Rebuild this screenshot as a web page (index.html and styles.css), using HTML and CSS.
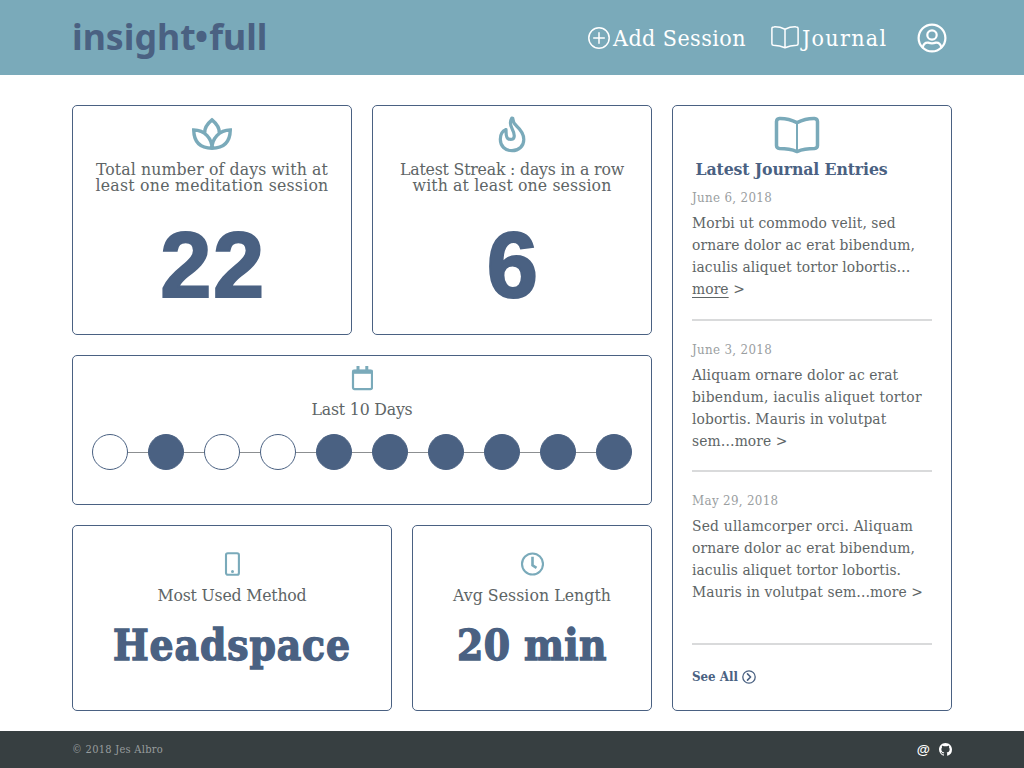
FILE: index.html
```html
<!DOCTYPE html>
<html lang="en">
<head>
<meta charset="utf-8">
<title>insight•full</title>
<link rel="stylesheet" href="styles.css">
</head>
<body>
<header class="header">
  <div class="logo">insight<span class="logo-dot">•</span>full</div>
  <nav class="nav">
    <a class="nav-item nav-add">
      <svg width="22" height="22" viewBox="0 0 22 22"><circle cx="11" cy="11" r="10.2"/><path d="M11 5.7v10.6M5.7 11h10.6"/></svg>
      <span class="nav-text">Add Session</span>
    </a>
    <a class="nav-item nav-journal">
      <svg width="28" height="23" viewBox="0 0 28 23"><path d="M14 3.2Q8.5.6 2.8.9Q.9.9.9 2.6V17.7Q.9 19.2 2.5 19.3Q9 19.5 14 21.8Q19 19.5 25.5 19.3Q27.1 19.2 27.1 17.7V2.6Q27.1.9 25.2.9Q19.5.6 14 3.2ZM14 3.2V21.8"/></svg>
      <span class="nav-text">Journal</span>
    </a>
    <a class="nav-user">
      <svg width="30" height="30" viewBox="0 0 30 30"><circle cx="15" cy="15" r="13.4"/><circle cx="15" cy="12" r="4.7"/><path d="M5.7 24.4C6.4 20.9 8.6 19.4 11.2 19.6Q15 21 18.8 19.6C21.4 19.4 23.6 20.9 24.3 24.4"/></svg>
    </a>
  </nav>
</header>

<main class="main">
  <div class="stats">
    <section class="card card-number">
      <div class="icon-row">
        <svg class="icon" width="42" height="34" viewBox="0 0 42 34"><path d="M13.700 16C13.400 11 17 6.200 21 2.900C25 6.200 28.600 11 28.300 16M21 31.200C21 22 14 13 2.700 13C3 25 9.500 31.200 21 31.200ZM21 31.200C21 22 28 13 39.300 13C39 25 32.500 31.200 21 31.200Z" stroke-linejoin="miter"/></svg>
      </div>
      <h2 class="label"><span class="line-total">Total number of days with at</span><span class="line-least">least one meditation session</span></h2>
      <div class="big-number">22</div>
    </section>
    <section class="card card-number">
      <div class="icon-row">
        <svg class="icon" width="28" height="38" viewBox="0 0 28 38"><path d="M13.800 3C11.700 6.500 12 10 14.200 14C16 17.500 16.700 20 16 22.300C15.300 25 10 25.300 8.800 22C7.800 19.500 8.200 17.500 8 14.500C4.500 16 2.300 20 2.300 24.200C2.300 31 7 35.700 14 35.700S25.800 31 25.800 24.400C25.800 18.500 22.600 14.800 18.800 11.300C16 8.700 14.700 6.500 14.800 3.200Z" stroke-width="3.200"/></svg>
      </div>
      <h2 class="label"><span class="line-streak">Latest Streak : days in a row</span><span class="line-with">with at least one session</span></h2>
      <div class="big-number">6</div>
    </section>

    <section class="card card-days">
      <svg class="icon" width="22" height="25" viewBox="0 0 22 25"><rect x="2" y="4.500" width="19" height="18.600" rx="1.500" stroke-width="2.200"/><path d="M1.500 5.800h20" stroke-width="4"/><path d="M7 0v5M15.800 0v5" stroke-width="3"/></svg>
      <h2 class="label line-last">Last 10 Days</h2>
      <div class="days">
        <i class="day"></i><i class="day done"></i><i class="day"></i><i class="day"></i><i class="day done"></i><i class="day done"></i><i class="day done"></i><i class="day done"></i><i class="day done"></i><i class="day done"></i>
      </div>
    </section>

    <section class="card card-method">
      <svg class="icon" width="16" height="24" viewBox="0 0 16 24"><rect x="2" y="1.200" width="12.900" height="21.600" rx="1.800" stroke-width="2.100"/><circle cx="8.500" cy="19.500" r="1.500" class="solid"/></svg>
      <h2 class="label line-method">Most Used Method</h2>
      <div class="value value-method">Headspace</div>
    </section>
    <section class="card card-length">
      <svg class="icon" width="24" height="24" viewBox="0 0 24 24"><circle cx="12.500" cy="12" r="10.500" stroke-width="2.100"/><path d="M12.500 4.800V13.400L16.500 15.900" stroke-width="2.600" stroke-linejoin="miter"/></svg>
      <h2 class="label line-avg">Avg Session Length</h2>
      <div class="value value-length">20 min</div>
    </section>
  </div>

  <aside class="card journal">
    <div class="journal-head">
      <svg class="icon" width="46" height="38" viewBox="0 0 46 38"><path d="M23 6.600Q14.500 2.200 5.500 2.400Q2.700 2.600 2.500 5.500V29.500Q2.600 32.300 5.500 32.600Q15.500 32.600 23 35.600Q30.500 32.600 40.500 32.600Q43.400 32.300 43.500 29.500V5.500Q43.300 2.600 40.500 2.400Q31.500 2.200 23 6.600Z" stroke-width="3.500"/><path d="M23 6.600V35" stroke-width="2"/></svg>
      <h2 class="journal-title">Latest Journal Entries</h2>
    </div>
    <article class="entry">
      <time class="date">June 6, 2018</time>
      <p class="text">Morbi ut commodo velit, sed<br>ornare dolor ac erat bibendum,<br>iaculis aliquet tortor lobortis…<br><a class="more">more</a> &gt;</p>
    </article>
    <article class="entry entry-2">
      <time class="date">June 3, 2018</time>
      <p class="text">Aliquam ornare dolor ac erat<br><span class="wide">bibendum, iaculis aliquet tortor</span><br>lobortis. Mauris in volutpat<br>sem…more &gt;</p>
    </article>
    <article class="entry entry-3">
      <time class="date">May 29, 2018</time>
      <p class="text"><span class="wide">Sed ullamcorper orci. Aliquam</span><br>ornare dolor ac erat bibendum,<br>iaculis aliquet tortor lobortis.<br>Mauris in volutpat sem…more &gt;</p>
    </article>
    <a class="see-all">See All
      <svg width="14" height="14" viewBox="0 0 14 14"><circle cx="7" cy="7" r="6.200"/><path d="M5.500 3.900L8.600 7L5.500 10.100" stroke-width="1.600"/></svg>
    </a>
  </aside>
</main>

<footer class="footer">
  <span class="copyright">© 2018 Jes Albro</span>
  <div class="social">
    <span class="at">@</span>
    <svg width="13" height="13" viewBox="0 0 16 16"><path d="M8 0C3.580 0 0 3.580 0 8c0 3.540 2.290 6.530 5.470 7.590.4.070.55-.17.55-.38 0-.19-.01-.82-.01-1.490-2.010.37-2.530-.49-2.690-.94-.09-.23-.48-.94-.82-1.130-.28-.15-.68-.52-.01-.53.63-.01 1.080.58 1.230.82.72 1.210 1.870.87 2.330.66.07-.52.28-.87.51-1.070-1.780-.2-3.640-.89-3.640-3.950 0-.87.31-1.590.82-2.150-.08-.2-.36-1.020.08-2.120 0 0 .67-.21 2.200.82.64-.18 1.320-.27 2-.27s1.360.09 2 .27c1.530-1.040 2.200-.82 2.200-.82.44 1.100.16 1.920.08 2.120.51.56.82 1.270.82 2.150 0 3.070-1.870 3.750-3.650 3.950.29.25.54.73.54 1.480 0 1.070-.01 1.930-.01 2.200 0 .21.15.46.55.38A8.010 8.010 0 0 0 16 8c0-4.420-3.580-8-8-8z"/></svg>
  </div>
</footer>
</body>
</html>
```
FILE: styles.css
```css
* { box-sizing: border-box; }
body {
  margin: 0;
  background: #fff;
  color: #5e6566;
  font-family: "DejaVu Serif Condensed", "DejaVu Serif", serif;
  height: 768px;
  display: flex;
  flex-direction: column;
  overflow: hidden;
}
svg { display: block; flex: none; fill: none; stroke-linecap: round; stroke-linejoin: round; }
h2, p { margin: 0; font-weight: 400; }

.header {
  height: 75px;
  flex: none;
  background: #7aaaba;
  padding: 0 77px 0 72px;
  display: flex;
  justify-content: space-between;
  align-items: center;
}
.logo {
  margin-bottom: 3px;
  font: 700 35.7px/48px "Noto Sans", sans-serif;
  color: #4a6182;
  white-space: nowrap;
}
.logo-dot { margin: 0 1px 0 -1px; }
.nav { display: flex; align-items: center; color: #fff; }
.nav svg { stroke: #fff; stroke-width: 1.5; }
.nav-item { display: flex; align-items: center; gap: 3px; white-space: nowrap; }
.nav-text { font-size: 23px; line-height: 32px; }
.nav-add .nav-text { letter-spacing: 0.45px; width: 133px; }
.nav-journal { margin-left: 25px; }
.nav-journal .nav-text { letter-spacing: 1.3px; width: 86px; }
.nav .nav-user { margin-left: 29px; }
.nav .nav-user svg { stroke-width: 2.2; }

.main {
  flex: none;
  height: 656px;
  padding: 30px 72px 20px;
  display: grid;
  grid-template-columns: 580px 280px;
  gap: 20px;
}
.stats {
  display: grid;
  grid-template-columns: repeat(29, 20px);
  grid-template-rows: 230px 150px 186px;
  row-gap: 20px;
}
.card {
  border: 1px solid #4a6182;
  border-radius: 5px;
  background: #fff;
  display: flex;
  flex-direction: column;
  align-items: center;
}
.card-number { grid-column: span 14; padding-top: 9px; }
.card-number + .card-number { grid-column: 16 / span 14; }
.card-days { grid-column: 1 / -1; padding-top: 10px; }
.card-method { grid-column: 1 / span 16; padding-top: 26px; }
.card-length { grid-column: 18 / span 12; padding-top: 26px; }

.icon { stroke: #7aaaba; stroke-width: 3.4; }
.icon path { stroke-linecap: butt; }
.solid { fill: #7aaaba; stroke: none; }
.icon-row { height: 38px; display: flex; align-items: center; }
.label { font-size: 17.5px; line-height: 16px; white-space: nowrap; text-align: center; }
.card-number .label { margin-top: 8px; display: flex; flex-direction: column; align-items: center; }
.line-total { letter-spacing: 0.11px; }
.line-least { letter-spacing: 0.24px; }
.line-streak { letter-spacing: -0.19px; }
.line-with { letter-spacing: 0.12px; }
.line-last { letter-spacing: -0.19px; margin-top: 10px; }
.line-method { letter-spacing: -0.2px; margin-top: 11px; }
.line-avg { letter-spacing: 0.06px; margin-top: 11px; }

.big-number {
  margin-top: 22px;
  font: 700 92px/100px "Liberation Sans", Arial, sans-serif;
  letter-spacing: 1.5px;
  color: #4a6182;
  -webkit-text-stroke: 2px #4a6182;
}
.card-number .big-number { padding-left: 2px; }
.value {
  margin-top: 16px;
  font-size: 42px;
  line-height: 54px;
  font-weight: 700;
  color: #4a6182;
  white-space: nowrap;
  -webkit-text-stroke: 1.3px #4a6182;
}
.value-method { letter-spacing: 0.9px; }
.value-length { letter-spacing: 0.4px; }

.days {
  margin-top: 17px;
  width: 541px;
  display: flex;
  justify-content: space-between;
  background: linear-gradient(#8c8f91, #8c8f91) center / 520px 1px no-repeat;
}
.day {
  width: 36px;
  height: 36px;
  border: 1px solid #4a6182;
  border-radius: 50%;
  background: #fff;
}
.done { background: #4a6182; }

.journal { padding: 10px 19px 0; align-items: stretch; }
.journal-head { width: 209px; display: flex; flex-direction: column; align-items: center; }
.journal-title {
  margin: 5px 0 0 -10px;
  font-size: 17.5px;
  line-height: 20px;
  font-weight: 700;
  letter-spacing: -0.13px;
  color: #4a6182;
  white-space: nowrap;
}
.entry { height: 142px; border-bottom: 2px solid #d9dadb; padding-top: 9px; }
.entry-2 { height: 151px; padding-top: 19px; }
.entry-3 { height: 173px; padding-top: 19px; }
.date { display: block; font-size: 13.2px; line-height: 20px; letter-spacing: 0.33px; color: #9a9e9f; }
.text { margin-top: 4px; font-size: 15.4px; line-height: 22px; letter-spacing: 0.09px; white-space: nowrap; }
.wide { letter-spacing: 0.22px; }
.more { text-decoration: underline; text-decoration-thickness: 1px; text-underline-offset: 3px; }
.see-all {
  margin-top: 22px;
  display: flex;
  align-items: center;
  gap: 4px;
  font-size: 13.2px;
  line-height: 20px;
  font-weight: 700;
  color: #4a6182;
}
.see-all svg { stroke: #4a6182; stroke-width: 1.3; }

.footer {
  height: 37px;
  flex: none;
  background: #373f41;
  padding: 0 72px;
  display: flex;
  justify-content: space-between;
  align-items: center;
}
.copyright { font-size: 11px; letter-spacing: 0.27px; color: #989d9e; }
.social { display: flex; align-items: center; gap: 9px; color: #fff; }
.social svg { fill: #fff; }
.at { font: 700 13.5px/16px "Liberation Sans", Arial, sans-serif; }
```
